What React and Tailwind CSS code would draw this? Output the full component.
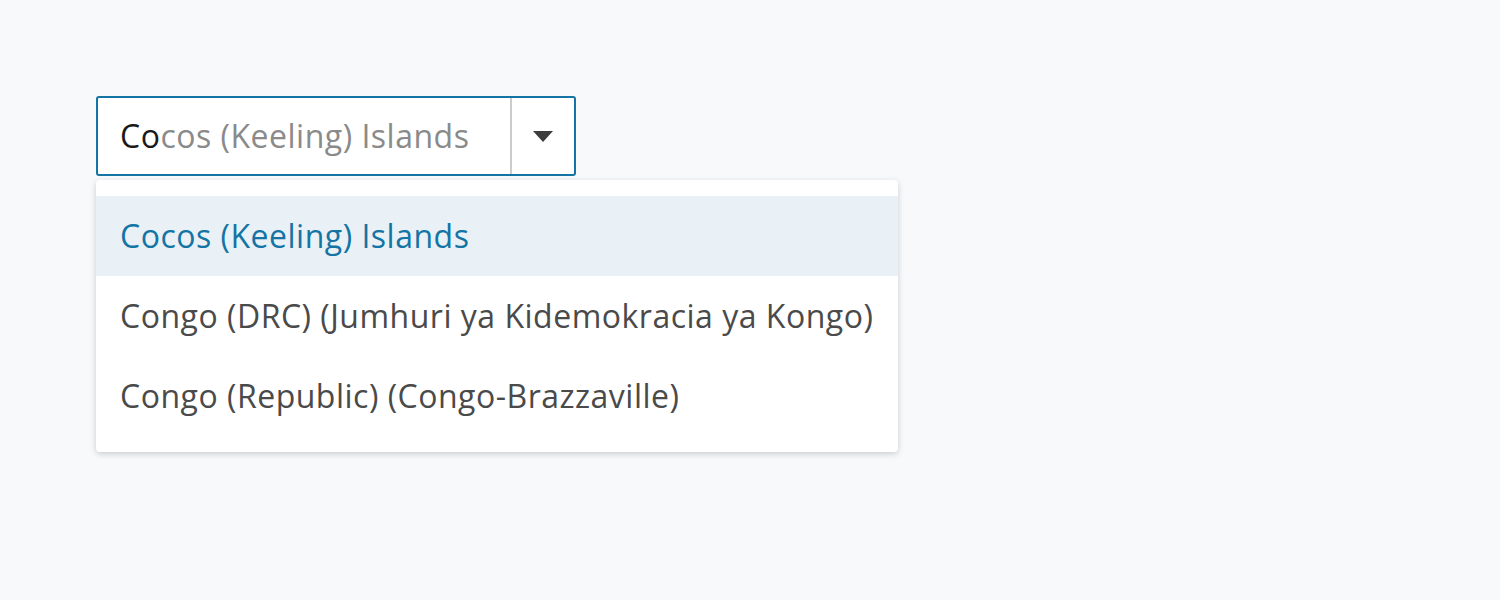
import * as React from "react"

const OPTIONS = [
  "Cocos (Keeling) Islands",
  "Congo (DRC) (Jumhuri ya Kidemokracia ya Kongo)",
  "Congo (Republic) (Congo-Brazzaville)",
]

export default function App() {
  return (
    <div className="min-h-[600px] w-full bg-[#f8f9fb] pt-[96px] pl-[96px] font-['Open_Sans',sans-serif]">
      {/* Combobox input */}
      <div className="flex h-[80px] w-[480px] rounded-[3px] border-2 border-[#1474a4] bg-white">
        <div className="flex flex-1 items-center pl-[22px] text-[32px] tracking-[0.5px]">
          <span className="text-[#1a1a1a]">Co</span>
          <span className="text-[#8a8a8a]">cos (Keeling) Islands</span>
        </div>
        <div className="w-[2px] bg-[#cccccc]" />
        <div className="flex w-[62px] items-center justify-center">
          <svg width="20" height="11" viewBox="0 0 20 11">
            <path d="M0 0 H20 L10 11 Z" fill="#3d3d3d" />
          </svg>
        </div>
      </div>

      {/* Listbox */}
      <div className="mt-[4px] w-[802px] rounded-[4px] bg-white py-[16px] shadow-[0_2px_6px_rgba(0,0,0,0.18)]">
        {OPTIONS.map((opt, i) => (
          <div
            key={opt}
            className={
              "flex h-[80px] items-center px-[24px] text-[32px] tracking-[0.5px] " +
              (i === 0 ? "bg-[#e9f1f7] text-[#1474a4]" : "text-[#4a4a4a]")
            }
          >
            {opt}
          </div>
        ))}
      </div>
    </div>
  )
}
